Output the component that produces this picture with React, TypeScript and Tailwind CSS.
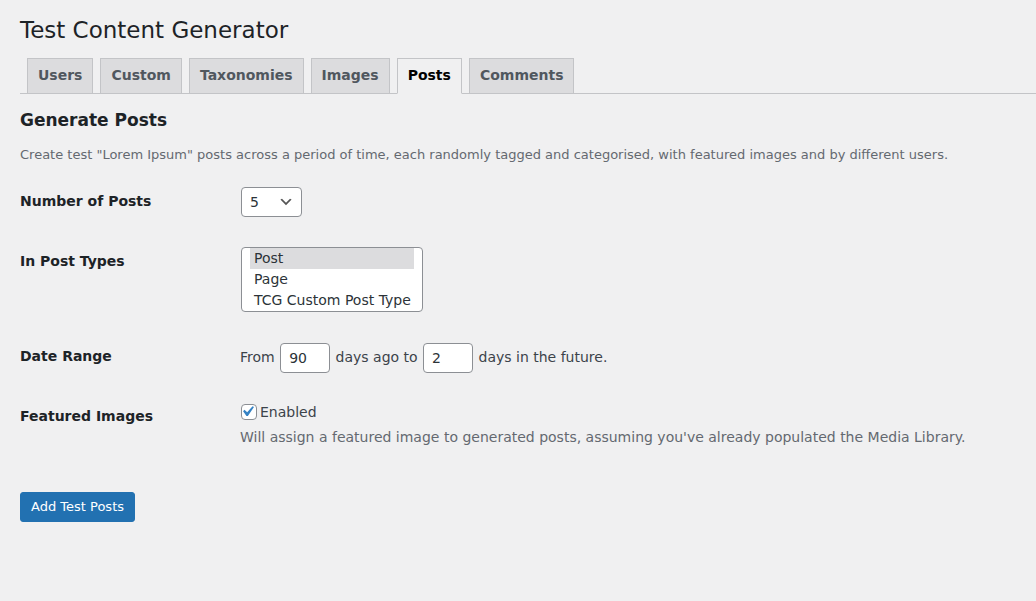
import { JSX } from "react";

const tabs: string[] = ["Users", "Custom", "Taxonomies", "Images", "Posts", "Comments"];
const activeTab = "Posts";

function Tab({ label }: { label: string }): JSX.Element {
  const active = label === activeTab;
  return (
    <a
      className={
        active
          ? "-mb-px border border-[#c3c4c7] border-b-[#f0f0f1] bg-[#f0f0f1] px-[10px] pt-[4px] pb-[6px] text-[14px] font-semibold leading-[24px] text-black"
          : "-mb-px border border-[#c3c4c7] bg-[#dcdcde] px-[10px] pt-[4px] pb-[6px] text-[14px] font-semibold leading-[24px] text-[#50575e]"
      }
    >
      {label}
    </a>
  );
}

function Row({ label, children }: { label: string; children: React.ReactNode }): JSX.Element {
  return (
    <div className="flex">
      <div className="w-[221px] shrink-0 py-[20px] text-[14px] font-semibold leading-[18px] text-[#1d2327]">
        {label}
      </div>
      <div className="py-[15px] text-[14px] leading-[18px]">{children}</div>
    </div>
  );
}

function Chevron(): JSX.Element {
  return (
    <svg viewBox="0 0 20 20" className="h-4 w-4" fill="#555">
      <path d="M5 6l5 5 5-5 2 1-7 7-7-7 2-1z" />
    </svg>
  );
}

function NumberInput({ value }: { value: string }): JSX.Element {
  return (
    <span className="mx-px inline-block h-[30px] w-[50px] rounded border border-[#8c8f94] bg-white px-2 align-middle text-[14px] leading-[28px] text-[#2c3338]">
      {value}
    </span>
  );
}

export default function App(): JSX.Element {
  const postTypes: string[] = ["Post", "Page", "TCG Custom Post Type"];

  return (
    <div className="min-h-[601px] bg-[#f0f0f1] font-['DejaVu_Sans',sans-serif] text-[13px] text-[#3c434a]">
      <div className="pl-5 pt-[6px]">
        <h1 className="pt-[9px] pb-[4px] text-[23px] font-normal leading-[30px] text-[#1d2327]">
          Test Content Generator
        </h1>

        <nav className="mt-[9px] flex gap-[7px] border-b border-[#c3c4c7] pl-[7px]">
          {tabs.map((t) => (
            <Tab key={t} label={t} />
          ))}
        </nav>

        <h2 className="mt-[14px] text-[17px] font-semibold leading-[24px] text-[#1d2327]">
          Generate Posts
        </h2>
        <p className="mt-[13px] text-[13px] leading-[20px] text-[#646970]">
          Create test "Lorem Ipsum" posts across a period of time, each randomly tagged and
          categorised, with featured images and by different users.
        </p>

        <div className="mt-[7px]">
          <Row label="Number of Posts">
            <div className="flex h-[30px] w-[61px] items-center justify-between rounded border border-[#8c8f94] bg-white pl-2 pr-[7px] text-[14px] text-[#2c3338]">
              <span>5</span>
              <Chevron />
            </div>
          </Row>

          <Row label="In Post Types">
            <div className="h-[65px] w-[182px] rounded border border-[#8c8f94] bg-white px-2 text-[14px] text-[#2c3338]">
              {postTypes.map((p, i) => (
                <div
                  key={p}
                  className={
                    i === 0
                      ? "h-[21px] bg-[#dcdcde] pl-[4px] leading-[21px]"
                      : "h-[21px] pl-[4px] leading-[21px]"
                  }
                >
                  {p}
                </div>
              ))}
            </div>
          </Row>

          <Row label="Date Range">
            <div className="-ml-px h-[30px] leading-[30px]">
              From <NumberInput value="90" /> days ago to <NumberInput value="2" /> days in the
              future.
            </div>
          </Row>

          <Row label="Featured Images">
            <label className="flex h-[20px] items-center gap-[3px]">
              <span className="relative block h-4 w-4 rounded border border-[#8c8f94] bg-white">
                <svg
                  viewBox="0 0 20 20"
                  className="absolute left-[-5px] top-[-4px] h-[21px] w-[21px]"
                  fill="#3582c4"
                >
                  <path d="M14.83 4.89l1.34.94-5.81 8.38H9.02L5.78 9.67l1.34-1.25 2.57 2.37z" />
                </svg>
              </span>
              <span>Enabled</span>
            </label>
            <p className="mt-[5px] -ml-px leading-[20px] text-[#646970]">
              Will assign a featured image to generated posts, assuming you've already populated
              the Media Library.
            </p>
          </Row>
        </div>

        <div className="mt-[30px]">
          <button className="h-[30px] rounded-[3px] border border-[#2271b1] bg-[#2271b1] px-[10px] text-[13px] leading-[28px] text-white">
            Add Test Posts
          </button>
        </div>
      </div>
    </div>
  );
}
